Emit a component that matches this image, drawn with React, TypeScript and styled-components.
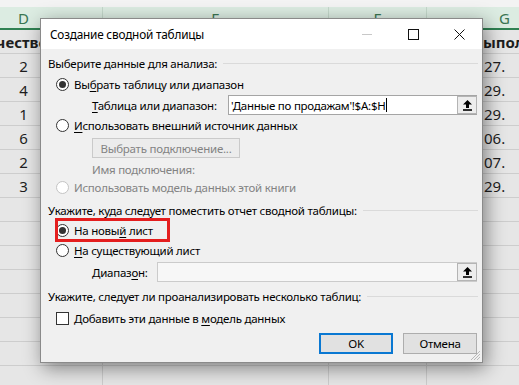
import styled, { createGlobalStyle } from 'styled-components'

const GlobalStyle = createGlobalStyle`
  html, body {
    margin: 0;
    padding: 0;
    background: #e6e6e6;
  }
  body {
    font-family: "Noto Sans", "Open Sans", sans-serif;
  }
`

interface Column {
    name: string
    width: number
}

const columns: Column[] = [
    { name: 'D', width: 158 },
    { name: 'E', width: 226 },
    { name: 'F', width: 98 },
    { name: 'G', width: 156 },
]

const amounts = ['2', '4', '1', '6', '2', '3']
const dates = ['27.', '29.', '29.', '06.', '07.', '29.']
const EMPTY_ROWS = 8

const Page = styled.div`
    position: relative;
    width: 519px;
    height: 385px;
    overflow: hidden;
    background: #e6e6e6;
`

const TopStrip = styled.div`
    height: 7px;
    background: #f3f3f3;
`

const ColumnHeader = styled.div`
    display: flex;
    margin-left: -55px;
    height: 21px;
    background: #dcece2;
    border-bottom: 2px solid #2f8152;
`

const HeaderCell = styled.div<{ $width: number }>`
    flex: none;
    width: ${p => p.$width}px;
    box-sizing: border-box;
    display: flex;
    align-items: center;
    justify-content: center;
    border-right: 1px solid #c4d8cb;
    color: #3a7552;
    font-family: "Noto Sans", sans-serif;
    font-size: 15px;
`

const SheetRow = styled.div<{ $height: number }>`
    display: flex;
    margin-left: -55px;
    height: ${p => p.$height}px;
    box-sizing: border-box;
    border-bottom: 1px solid #cdcdcd;
`

const SheetCell = styled.div<{ $width: number; $align: 'left' | 'center'; $pad?: number; $bold?: boolean }>`
    flex: none;
    width: ${p => p.$width}px;
    box-sizing: border-box;
    display: flex;
    align-items: center;
    justify-content: ${p => (p.$align === 'center' ? 'center' : 'flex-start')};
    padding-left: ${p => p.$pad ?? 0}px;
    border-right: 1px solid #cdcdcd;
    white-space: nowrap;
    color: #1e1e1e;
    font-family: "Noto Sans", sans-serif;
    font-size: 15px;
    font-weight: ${p => (p.$bold ? 700 : 400)};
`

const Dialog = styled.div`
    position: absolute;
    left: 40px;
    top: 18px;
    width: 443px;
    height: 345px;
    box-sizing: border-box;
    display: flex;
    flex-direction: column;
    border: 1px solid #8a8a8a;
    background: #f0f0f0;
    box-shadow: 3px 5px 18px rgba(0, 0, 0, 0.45);
    font-family: "Noto Sans", sans-serif;
    font-size: 11.5px;
    letter-spacing: -0.25px;
    color: #000;
`

const TitleBar = styled.div`
    flex: none;
    height: 30px;
    display: flex;
    align-items: center;
    background: #fff;
    padding-left: 9px;
`

const Title = styled.div`
    flex: 1;
    font-size: 11.8px;
    letter-spacing: -0.2px;
    color: #000;
`

const TitleButton = styled.div`
    flex: none;
    width: 46px;
    height: 30px;
    display: flex;
    align-items: center;
    justify-content: center;
`

const Body = styled.div`
    flex: 1;
    display: flex;
    flex-direction: column;
    padding: 6px 4px 0 7px;
    position: relative;
`

const Row = styled.div<{ $top: number; $indent?: number; $height?: number }>`
    position: relative;
    display: flex;
    align-items: center;
    flex: none;
    height: ${p => p.$height ?? 20}px;
    margin-top: ${p => p.$top}px;
    margin-left: ${p => p.$indent ?? 0}px;
    white-space: nowrap;
`

const SectionTitle = styled(Row)`
    &::after {
        content: '';
        flex: 1;
        height: 1px;
        margin-left: 6px;
        background: #dadada;
    }
`

const Highlight = styled(Row)`
    &::after {
        content: '';
        position: absolute;
        left: -1px;
        top: -2px;
        width: 115px;
        height: 24px;
        box-sizing: border-box;
        border: 3px solid #e41e1e;
    }
`

const Radio = styled.span<{ $checked?: boolean; $disabled?: boolean }>`
    flex: none;
    width: 13px;
    height: 13px;
    box-sizing: border-box;
    border-radius: 50%;
    border: 1px solid ${p => (p.$disabled ? '#c4c4c4' : '#333')};
    background: #fff;
    margin-right: 5px;
    display: flex;
    align-items: center;
    justify-content: center;

    &::after {
        content: '';
        display: ${p => (p.$checked ? 'block' : 'none')};
        width: 7px;
        height: 7px;
        border-radius: 50%;
        background: #333;
    }
`

const CheckBox = styled.span`
    flex: none;
    width: 13px;
    height: 13px;
    box-sizing: border-box;
    border: 1px solid #333;
    background: #fff;
    margin-right: 5px;
`

const Label = styled.span<{ $disabled?: boolean; $width?: number }>`
    color: ${p => (p.$disabled ? '#838383' : '#000')};
    ${p => (p.$width ? `flex: none; width: ${p.$width}px;` : '')}
`

const Key = styled.u`
    text-decoration: underline;
    text-underline-offset: 2px;
`

const Field = styled.div<{ $disabled?: boolean }>`
    flex: 1;
    height: 20px;
    box-sizing: border-box;
    display: flex;
    align-items: center;
    border: 1px solid ${p => (p.$disabled ? '#cbcbcb' : '#a5a5a5')};
    background: ${p => (p.$disabled ? '#f7f7f7' : '#fff')};
    padding-left: 2px;
    margin-right: 1px;
`

const FieldText = styled.span`
    flex: 1;
    display: flex;
    align-items: center;
    color: #000;
`

const Caret = styled.span`
    width: 1px;
    height: 14px;
    background: #000;
    margin-left: 1px;
`

const PickButton = styled.span`
    flex: none;
    width: 20px;
    height: 18px;
    box-sizing: border-box;
    display: flex;
    align-items: center;
    justify-content: center;
    border: 1px solid #b4b4b4;
    background: #ededed;
    margin-right: -1px;
`

const GhostButton = styled.div`
    width: 148px;
    height: 20px;
    box-sizing: border-box;
    display: flex;
    align-items: center;
    justify-content: center;
    border: 1px solid #cacaca;
    background: #ececec;
    color: #838383;
`

const Footer = styled(Row)`
    justify-content: flex-end;
    gap: 10px;
    padding-right: 1px;
`

const Button = styled.div<{ $primary?: boolean }>`
    width: 74px;
    height: 21px;
    box-sizing: border-box;
    display: flex;
    align-items: center;
    justify-content: center;
    background: #e1e1e1;
    border: ${p => (p.$primary ? '2px solid #0a78d2' : '1px solid #adadad')};
`

const Grip = styled.svg`
    position: absolute;
    right: 1px;
    bottom: 1px;
`

function UploadIcon() {
    return (
        <svg width="11" height="12" viewBox="0 0 11 12">
            <path d="M5.5 1 L10 5.6 H7 V9 H4 V5.6 H1 Z" fill="#000" />
            <rect x="1" y="10.2" width="9" height="1.6" fill="#000" />
        </svg>
    )
}

function RangeField(props: { value?: string; disabled?: boolean }) {
    return (
        <Field $disabled={props.disabled}>
            <FieldText>
                {props.value}
                {props.value && <Caret />}
            </FieldText>
            <PickButton>
                <UploadIcon />
            </PickButton>
        </Field>
    )
}

function Sheet() {
    const [d, e, f, g] = columns
    return (
        <>
            <TopStrip />
            <ColumnHeader>
                {columns.map(col => (
                    <HeaderCell key={col.name} $width={col.width}>{col.name}</HeaderCell>
                ))}
            </ColumnHeader>
            <SheetRow $height={24}>
                <SheetCell $width={d.width} $align="left" $pad={12} $bold>Количество</SheetCell>
                <SheetCell $width={e.width} $align="left" />
                <SheetCell $width={f.width} $align="left" />
                <SheetCell $width={g.width} $align="left" $pad={46} $bold>Выпол.</SheetCell>
            </SheetRow>
            {amounts.map((amount, i) => (
                <SheetRow key={`data-${i}`} $height={24}>
                    <SheetCell $width={d.width} $align="center">{amount}</SheetCell>
                    <SheetCell $width={e.width} $align="left" />
                    <SheetCell $width={f.width} $align="left" />
                    <SheetCell $width={g.width} $align="left" $pad={57}>{dates[i]}</SheetCell>
                </SheetRow>
            ))}
            {Array.from({ length: EMPTY_ROWS }).map((_, i) => (
                <SheetRow key={`empty-${i}`} $height={24}>
                    {columns.map(col => (
                        <SheetCell key={col.name} $width={col.width} $align="left" />
                    ))}
                </SheetRow>
            ))}
        </>
    )
}

export default function App() {
    return (
        <Page>
            <GlobalStyle />
            <Sheet />
            <Dialog>
                <TitleBar>
                    <Title>Создание сводной таблицы</Title>
                    <TitleButton>
                        <svg width="10" height="10" viewBox="0 0 10 10">
                            <path d="M0 5.5 H10" stroke="#c8c8c8" strokeWidth="1" />
                        </svg>
                    </TitleButton>
                    <TitleButton>
                        <svg width="11" height="11" viewBox="0 0 11 11">
                            <rect x="0.5" y="0.5" width="10" height="10" fill="none" stroke="#111" strokeWidth="1" />
                        </svg>
                    </TitleButton>
                    <TitleButton>
                        <svg width="11" height="11" viewBox="0 0 11 11">
                            <path d="M0.5 0.5 L10.5 10.5 M10.5 0.5 L0.5 10.5" stroke="#111" strokeWidth="1" />
                        </svg>
                    </TitleButton>
                </TitleBar>
                <Body>
                    <SectionTitle $top={0} $height={16}>Выберите данные для анализа:</SectionTitle>
                    <Row $top={3} $indent={8}>
                        <Radio $checked />
                        <Label>Вы<Key>б</Key>рать таблицу или диапазон</Label>
                    </Row>
                    <Row $top={1} $indent={44}>
                        <Label $width={136}><Key>Т</Key>аблица или диапазон:</Label>
                        <RangeField value="'Данные по продажам'!$A:$H" />
                    </Row>
                    <Row $top={0} $indent={8}>
                        <Radio />
                        <Label><Key>И</Key>спользовать внешний источник данных</Label>
                    </Row>
                    <Row $top={3} $indent={44}>
                        <GhostButton>Выбрать подключение...</GhostButton>
                    </Row>
                    <Row $top={4} $indent={44} $height={15}>
                        <Label $disabled>Имя подключения:</Label>
                    </Row>
                    <Row $top={0} $indent={8}>
                        <Radio $disabled />
                        <Label $disabled>Использовать модель данных этой книги</Label>
                    </Row>
                    <SectionTitle $top={5} $height={16}>Укажите, куда следует поместить отчет сводной таблицы:</SectionTitle>
                    <Highlight $top={2} $indent={8}>
                        <Radio $checked />
                        <Label>На новы<Key>й</Key> лист</Label>
                    </Highlight>
                    <Row $top={0} $indent={8}>
                        <Radio />
                        <Label><Key>Н</Key>а существующий лист</Label>
                    </Row>
                    <Row $top={2} $indent={44}>
                        <Label $width={65}>Диапаз<Key>о</Key>н:</Label>
                        <RangeField disabled />
                    </Row>
                    <SectionTitle $top={6} $height={16}>Укажите, следует ли проанализировать несколько таблиц:</SectionTitle>
                    <Row $top={4} $indent={8}>
                        <CheckBox />
                        <Label>Добавить эти данные в <Key>м</Key>одель данных</Label>
                    </Row>
                    <Footer $top={5} $height={21}>
                        <Button $primary>OK</Button>
                        <Button>Отмена</Button>
                    </Footer>
                    <Grip width="10" height="10" viewBox="0 0 10 10">
                        <path d="M9 3 L3 9 M9 6 L6 9 M9 0 L0 9" stroke="#b9b9b9" strokeWidth="1" />
                    </Grip>
                </Body>
            </Dialog>
        </Page>
    )
}
